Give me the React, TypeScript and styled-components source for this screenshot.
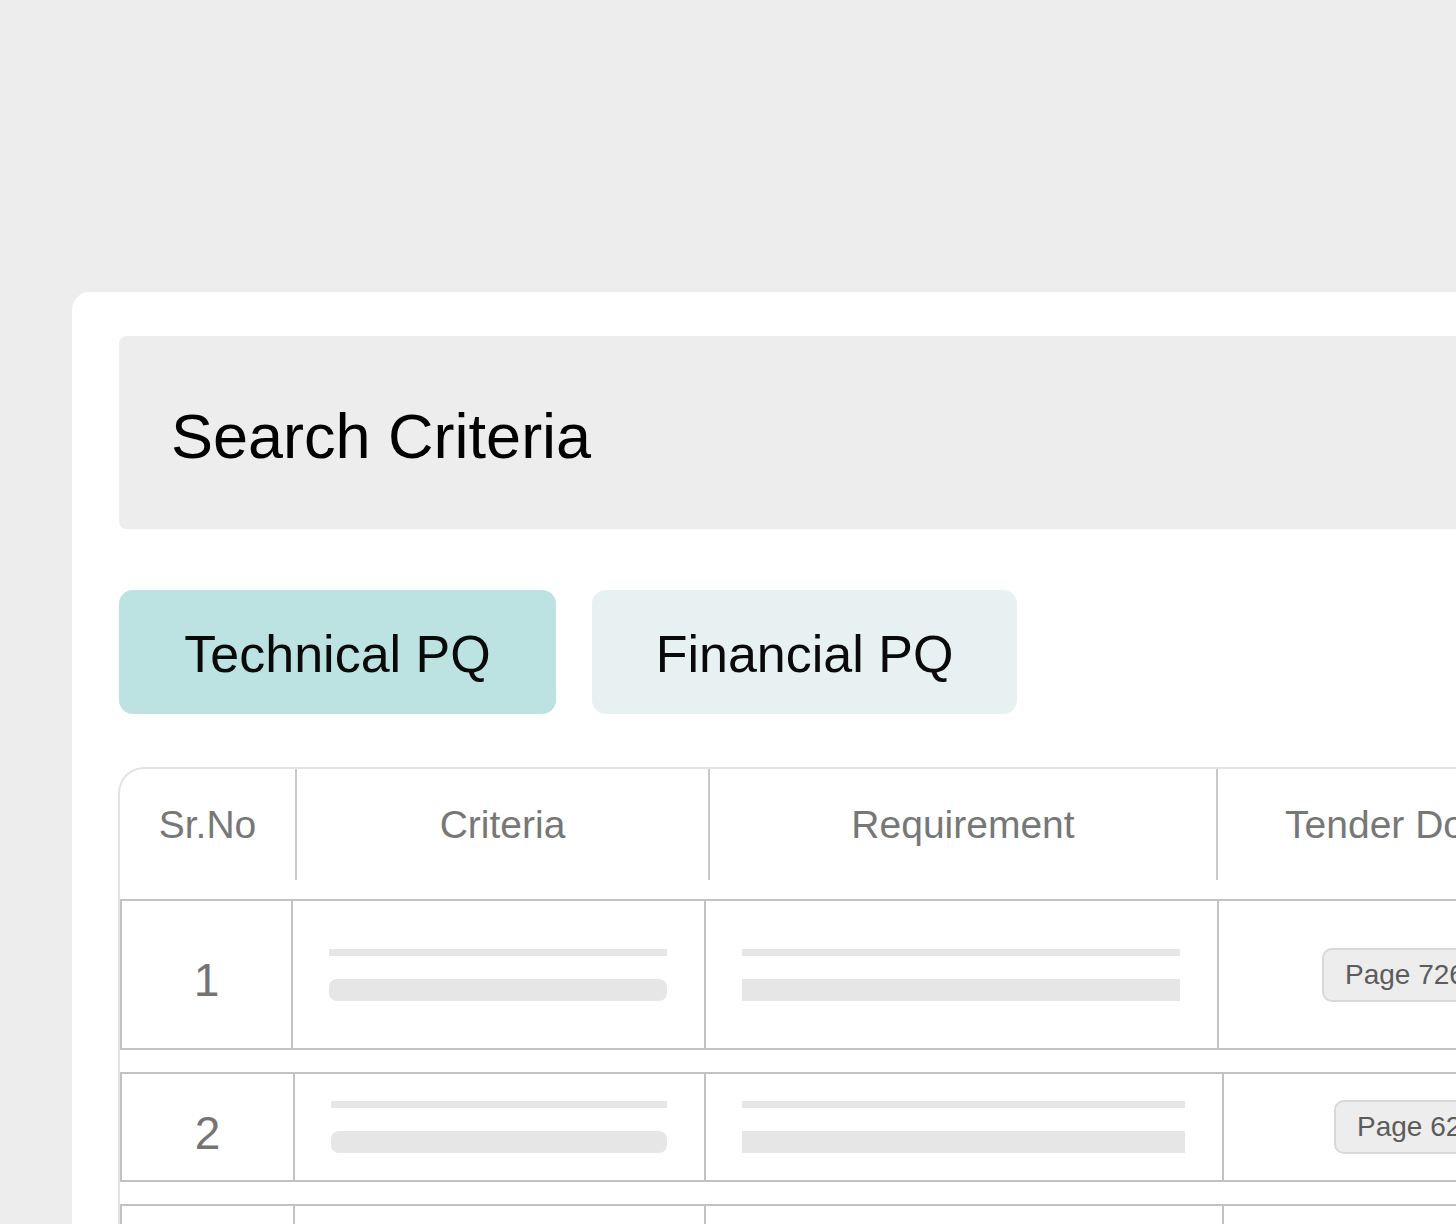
import styled, { createGlobalStyle } from 'styled-components';

const GlobalStyle = createGlobalStyle`
  body {
    margin: 0;
    background: #ededed;
    font-family: "Liberation Sans", Arial, sans-serif;
  }
`;

const Page = styled.div`
  height: 1224px;
  overflow: hidden;
  padding: 292px 0 0 72px;
  box-sizing: border-box;
`;

const Card = styled.section`
  width: 1500px;
  min-height: 1000px;
  background: #ffffff;
  border-top-left-radius: 18px;
  padding: 44px 0 0 47px;
  box-sizing: border-box;
`;

const SearchBox = styled.div`
  width: 1400px;
  height: 193px;
  box-sizing: border-box;
  display: flex;
  align-items: center;
  padding: 8px 0 0 52px;
  background: #ededed;
  border-radius: 8px;
`;

const Title = styled.h1`
  margin: 0;
  font-size: 63px;
  font-weight: 400;
  line-height: 1;
  color: #000;
`;

const Tabs = styled.div`
  display: flex;
  gap: 36px;
  margin-top: 61px;
`;

const Tab = styled.button<{ $w: number; $active?: boolean }>`
  width: ${({ $w }) => $w}px;
  height: 124px;
  border: none;
  border-radius: 14px;
  padding: 4px 0 0;
  display: flex;
  align-items: center;
  justify-content: center;
  background: ${({ $active }) => ($active ? '#bce2e2' : '#e8f1f1')};
  font-family: inherit;
  font-size: 52px;
  line-height: 1;
  color: #0a0a0a;
  cursor: pointer;
`;

const Table = styled.div`
  width: 1500px;
  margin: 53px 0 0 -1px;
  border-top: 2px solid #e2e2e2;
  border-left: 2px solid #e2e2e2;
  border-top-left-radius: 26px;
`;

const HeaderRow = styled.div`
  display: grid;
  grid-template-columns: 175px 413px 508px 444px;
  padding-bottom: 19px;
`;

const HeadCell = styled.div`
  height: 111px;
  display: flex;
  align-items: center;
  justify-content: center;
  font-size: 39px;
  line-height: 1;
  color: #777;
  white-space: nowrap;

  & + & {
    border-left: 2px solid #c9c9c9;
  }
`;

const Rows = styled.div`
  display: flex;
  flex-direction: column;
  gap: 22px;
`;

const Row = styled.div<{ $cols: string; $h: number }>`
  display: grid;
  grid-template-columns: ${({ $cols }) => $cols};
  height: ${({ $h }) => $h}px;
  box-sizing: border-box;
  border: 2px solid #c2c2c2;
  border-right: none;
`;

const Cell = styled.div`
  display: flex;
  align-items: center;

  & + & {
    border-left: 2px solid #c2c2c2;
  }
`;

const NumCell = styled(Cell)`
  justify-content: center;
  padding-top: 11px;
  font-size: 46px;
  line-height: 1;
  color: #747474;
`;

const BarsCell = styled(Cell)`
  flex-direction: column;
  align-items: stretch;
  justify-content: center;
  gap: 23px;
  padding: 0 37px 0 36px;
`;

const Bar = styled.div<{ $h: number; $round?: boolean }>`
  height: ${({ $h }) => $h}px;
  background: #e6e6e6;
  border-radius: ${({ $round }) => ($round ? '8px' : '0')};
`;

const PageCell = styled(Cell)<{ $lead: number }>`
  padding-left: ${({ $lead }) => $lead}px;
`;

const Badge = styled.span`
  height: 54px;
  box-sizing: border-box;
  display: inline-flex;
  align-items: center;
  padding: 0 19px 0 21px;
  border: 2px solid #d8d8d8;
  border-radius: 10px;
  background: #ededed;
  font-size: 28px;
  color: #5c5c5c;
  white-space: nowrap;
`;

const rows = [
  { no: '1', page: 'Page 726 - 728', cols: '169px 413px 513px 1fr', h: 151, lead: 103 },
  { no: '2', page: 'Page 628 - 630', cols: '171px 411px 518px 1fr', h: 110, lead: 110 },
  { no: '3', page: '', cols: '171px 411px 518px 1fr', h: 150, lead: 110 },
];

export default function App() {
  return (
    <>
      <GlobalStyle />
      <Page>
        <Card>
          <SearchBox>
            <Title>Search Criteria</Title>
          </SearchBox>
          <Tabs>
            <Tab $w={437} $active>
              Technical PQ
            </Tab>
            <Tab $w={425}>Financial PQ</Tab>
          </Tabs>
          <Table>
            <HeaderRow>
              <HeadCell>Sr.No</HeadCell>
              <HeadCell>Criteria</HeadCell>
              <HeadCell>Requirement</HeadCell>
              <HeadCell>Tender Document</HeadCell>
            </HeaderRow>
            <Rows>
              {rows.map((r) => (
                <Row key={r.no} $cols={r.cols} $h={r.h}>
                  <NumCell>{r.page ? r.no : ''}</NumCell>
                  <BarsCell>
                    {r.page && (
                      <>
                        <Bar $h={7} />
                        <Bar $h={22} $round />
                      </>
                    )}
                  </BarsCell>
                  <BarsCell>
                    {r.page && (
                      <>
                        <Bar $h={7} />
                        <Bar $h={22} />
                      </>
                    )}
                  </BarsCell>
                  <PageCell $lead={r.lead}>{r.page && <Badge>{r.page}</Badge>}</PageCell>
                </Row>
              ))}
            </Rows>
          </Table>
        </Card>
      </Page>
    </>
  );
}
